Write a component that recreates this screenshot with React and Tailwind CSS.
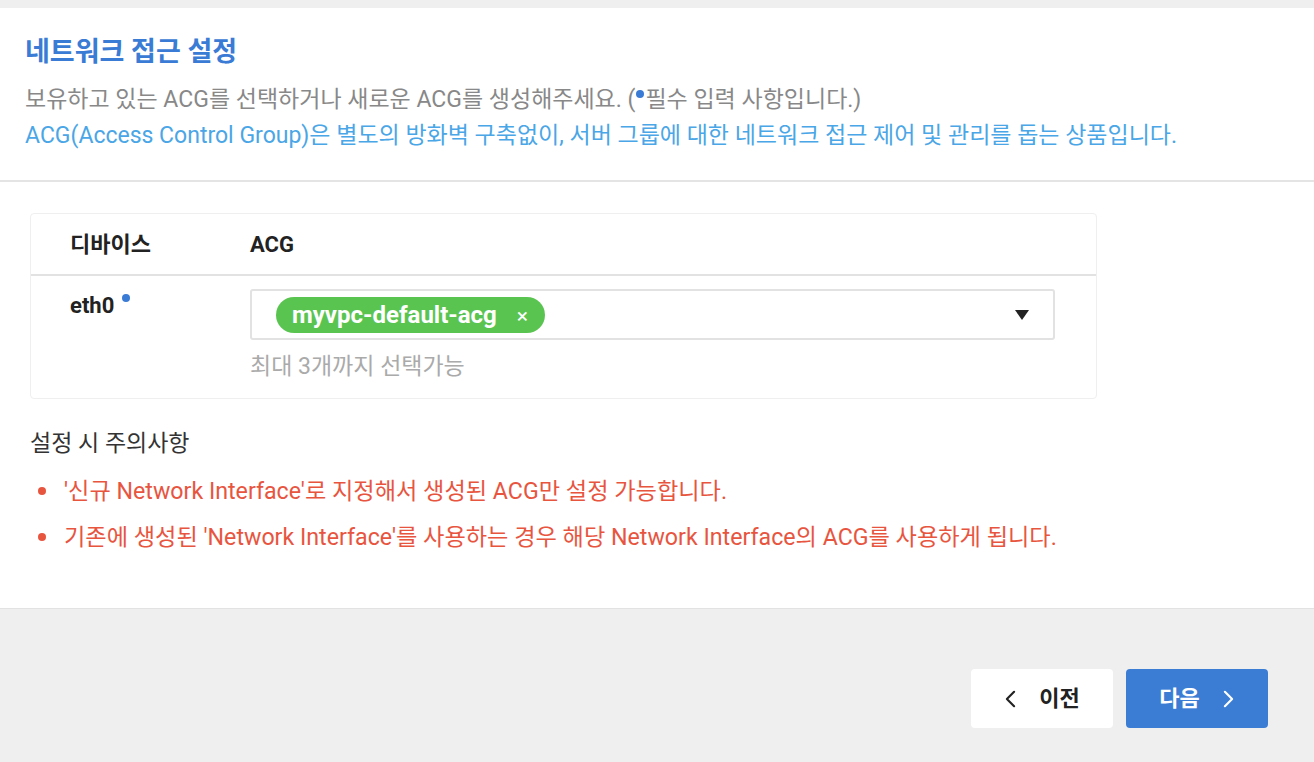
import React from "react";

function ChevronLeft({ className }) {
  return (
    <svg viewBox="0 0 14 20" fill="none" stroke="currentColor" strokeWidth={2.4} strokeLinecap="round" strokeLinejoin="round" className={className}>
      <path d="M11 2L3 10l8 8" />
    </svg>
  );
}

function ChevronRight({ className }) {
  return (
    <svg viewBox="0 0 14 20" fill="none" stroke="currentColor" strokeWidth={2.4} strokeLinecap="round" strokeLinejoin="round" className={className}>
      <path d="M3 2l8 8-8 8" />
    </svg>
  );
}

const notices = [
  "'신규 Network Interface'로 지정해서 생성된 ACG만 설정 가능합니다.",
  "기존에 생성된 'Network Interface'를 사용하는 경우 해당 Network Interface의 ACG를 사용하게 됩니다.",
];

export default function App() {
  return (
    <div className="w-[1314px] h-[762px] overflow-hidden bg-[#efefef] font-['Roboto','Noto_Sans_CJK_KR',sans-serif]">
      <div className="h-[8px]" />
      <div className="bg-white border-b border-[#e2e2e2]">
        <section className="px-[25px] pt-[26px] pb-[26px] border-b-2 border-[#e4e4e4]">
          <h1 className="text-[27px] leading-[36px] font-bold text-[#3a7bd5]">네트워크 접근 설정</h1>
          <p className="mt-[12px] text-[23px] leading-[36px] text-[#888888]">
            보유하고 있는 ACG를 선택하거나 새로운 ACG를 생성해주세요. (
            <span className="relative -top-[9px] inline-block w-[8px] h-[8px] rounded-full bg-[#3a7bd5] mx-[1px]" />
            필수 입력 사항입니다.)
          </p>
          <p className="text-[23px] leading-[36px] text-[#4aa6e6]">
            ACG(Access Control Group)은 별도의 방화벽 구축없이, 서버 그룹에 대한 네트워크 접근 제어 및 관리를 돕는 상품입니다.
          </p>
        </section>

        <section className="px-[30px] pt-[31px] pb-[56px]">
          <div className="w-[1067px] border border-[#efefef] rounded-[4px]">
            <div className="flex h-[62px] items-center border-b-2 border-[#e2e2e2] text-[22px] font-bold text-[#222]">
              <div className="w-[219px] pl-[39px]">디바이스</div>
              <div>ACG</div>
            </div>
            <div className="flex pt-[13px] pb-[16px]">
              <div className="w-[219px] pl-[39px] pt-[2px]">
                <span className="text-[22px] leading-[30px] font-bold text-[#222]">eth0</span>
                <span className="relative -top-[11px] ml-[8px] inline-block w-[8px] h-[8px] rounded-full bg-[#3a7bd5]" />
              </div>
              <div className="flex-1 pr-[41px]">
                <div className="h-[51px] border-2 border-[#e2e2e2] rounded-[3px] flex items-center pl-[24px] pr-[24px]">
                  <span className="h-[36px] w-[269px] rounded-full bg-[#5ac451] flex items-center pl-[16px] text-white text-[24px] font-bold">
                    myvpc-default-acg
                    <span className="ml-[20px] mt-[4px] text-[21px] font-normal">×</span>
                  </span>
                  <span className="ml-auto w-0 h-0 border-l-[7px] border-r-[7px] border-t-[10px] border-l-transparent border-r-transparent border-t-[#222]" />
                </div>
                <p className="mt-[12px] text-[23px] leading-[30px] text-[#aaaaaa]">최대 3개까지 선택가능</p>
              </div>
            </div>
          </div>

          <h2 className="mt-[30px] text-[23px] leading-[30px] text-[#333]">설정 시 주의사항</h2>
          <ul className="mt-[17px] flex flex-col gap-[16px]">
            {notices.map((t) => (
              <li key={t} className="flex items-center text-[23.2px] leading-[30px] text-[#e8553f]">
                <span className="ml-[8px] mr-[18px] w-[8px] h-[8px] rounded-full bg-[#e8553f]" />
                {t}
              </li>
            ))}
          </ul>
        </section>
      </div>

      <div className="flex justify-end gap-[13px] pr-[46px] pt-[60px]">
        <button className="w-[142px] h-[59px] rounded-[4px] bg-white flex items-center justify-center gap-[22px] text-[22px] font-bold text-[#222]">
          <ChevronLeft className="w-[13px] h-[18px]" />
          이전
        </button>
        <button className="w-[142px] h-[59px] rounded-[4px] bg-[#3b7dd4] flex items-center justify-center gap-[22px] text-[22px] font-bold text-white">
          다음
          <ChevronRight className="w-[13px] h-[18px]" />
        </button>
      </div>
    </div>
  );
}
